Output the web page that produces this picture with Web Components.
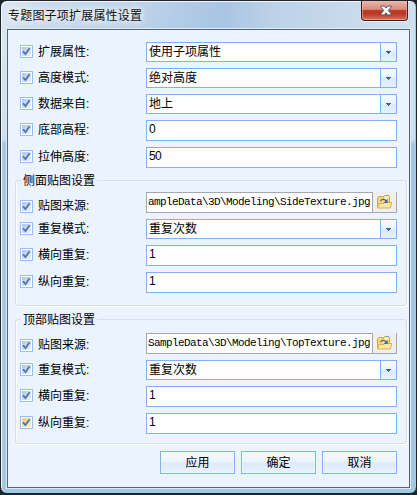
<!DOCTYPE html>
<html lang="zh-CN"><head><meta charset="utf-8"><title>专题图子项扩展属性设置</title>
<style>
html,body{margin:0;height:495px;overflow:hidden;background:#1c242c}
body{font:12px/14px "Liberation Sans","Noto Sans CJK SC",sans-serif;color:#000}
</style></head><body>
<dialog-window heading="专题图子项扩展属性设置">
  <field-row label="扩展属性:" style="margin-top:12px"><combo-box>使用子项属性</combo-box></field-row>
  <field-row label="高度模式:"><combo-box>绝对高度</combo-box></field-row>
  <field-row label="数据来自:"><combo-box>地上</combo-box></field-row>
  <field-row label="底部高程:"><text-field>0</text-field></field-row>
  <field-row label="拉伸高度:"><text-field>50</text-field></field-row>
  <group-box heading="侧面贴图设置" style="margin-top:5px;height:133px;--lead:5px">
    <field-row label="贴图来源:" style="--check-top:8px;--label-top:7px"><path-field>ampleData\3D\Modeling\SideTexture.jpg</path-field></field-row>
    <field-row label="重复模式:"><combo-box>重复次数</combo-box></field-row>
    <field-row label="横向重复:"><text-field>1</text-field></field-row>
    <field-row label="纵向重复:"><text-field>1</text-field></field-row>
  </group-box>
  <group-box heading="顶部贴图设置" style="margin-top:6px;height:132px;--lead:7px">
    <field-row label="贴图来源:" style="--check-top:6px;--label-top:5px"><path-field>SampleData\3D\Modeling\TopTexture.jpg</path-field></field-row>
    <field-row label="重复模式:"><combo-box>重复次数</combo-box></field-row>
    <field-row label="横向重复:"><text-field>1</text-field></field-row>
    <field-row label="纵向重复:" hot><text-field>1</text-field></field-row>
  </group-box>
  <button-bar><push-button>应用</push-button><push-button>确定</push-button><push-button>取消</push-button></button-bar>
</dialog-window>
<script>
const define=(name,html)=>customElements.define(name,class extends HTMLElement{
  connectedCallback(){
    if(this.shadowRoot)return;
    const t=document.createElement('template');
    t.innerHTML=typeof html==='function'?html(this):html;
    this.attachShadow({mode:'open'}).append(t.content.cloneNode(true));
  }
});
const base='*{box-sizing:border-box}';

define('close-button',`<style>${base}
:host{display:block;width:47px;height:20px;box-sizing:border-box;border:1px solid #431d20;border-top:0;border-radius:0 0 4px 4px;background:linear-gradient(#eab5a9 0,#dc8c7b 44%,#c0402b 48%,#b93622 65%,#dc7058 100%);box-shadow:inset 0 0 0 1px #f3c0b488,0 1px 0 #e6f2fb}
svg{display:block;margin:4px 0 0 18px}</style>
<svg width="12" height="11" viewBox="0 0 12 11"><path d="M1 1h3.4L6 3.1 7.6 1H11v1.3L8.3 5.5 11 8.7V10H7.6L6 7.9 4.4 10H1V8.7l2.7-3.2L1 2.3z" fill="#fff" stroke="#505468" stroke-width="1"/></svg>`);

define('dialog-window',h=>`<style>${base}
:host{display:flex;flex-direction:column;box-sizing:border-box;width:417px;height:494px;padding:0 7px 5px 6px;border:1px solid #20242e;border-radius:7px;box-shadow:inset 1px 1px 0 #f3f8fd,inset -1px -1px 0 #8fd0ef;background:linear-gradient(#0000 0 138px,#a9c6e3 143px),linear-gradient(100deg,#dde7f1 0,#cadbeb 40px,#bfd4e9 130px,#a8c5e2 220px,#bcd2e7 270px,#cfdfed 390px)}
header{height:28px;flex:none;display:flex;justify-content:space-between;padding:0 1px 0 1px}
h1{margin:7px 0 0;font:12px/14px "Noto Sans CJK SC",sans-serif;letter-spacing:.2px;color:#111;text-shadow:0 0 6px #fff,0 0 8px #fff}
main{flex:none;height:459px;width:403px;border:1px solid #566573;background:#ebf3fe;box-shadow:0 0 0 1px #dceaf7;display:flex;flex-direction:column}
</style><header><h1>${h.getAttribute('heading')}</h1><close-button></close-button></header><main><slot></slot></main>`);

define('check-box',`<style>${base}
:host{display:block;width:13px;height:13px;flex:none;border:1px solid #91c1f8;padding:1px;background:#fff;box-sizing:border-box}
div{width:9px;height:9px;background:linear-gradient(135deg,#b4c5da,#edf2f8)}
:host([hot]) div{background:linear-gradient(135deg,#f6c878,#fff0cb)}
svg{display:block}</style><div><svg width="9" height="9" viewBox="0 0 9 9"><path d="M1 4.4L3.5 7 7.6 1.2" fill="none" stroke="#4777b5" stroke-width="1.8"/></svg></div>`);

define('field-row',h=>`<style>${base}
:host{display:flex;align-items:flex-start;margin-top:6px;padding-left:12px;height:fit-content;flex:none}
check-box{margin-top:var(--check-top,3px)}
span{display:block;width:108px;margin:var(--label-top,3px) 0 0 5px;white-space:nowrap}
</style><check-box ${h.hasAttribute('hot')?'hot':''}></check-box><span>${h.getAttribute('label')}</span><slot></slot>`);

define('combo-box',`<style>${base}
:host{display:flex;width:251px;height:20px;border:1px solid #7db2f5;background:#fff;box-sizing:border-box}
span{flex:1;padding:2px 0 0 2px;white-space:nowrap}
i{width:16px;border-left:1px solid #7db2f5;background:linear-gradient(#f8fbff,#eaf3fe 45%,#dbe9f8 55%,#e8f2fd);display:flex;align-items:center;justify-content:center}
</style><span><slot></slot></span><i><svg width="5" height="3" viewBox="0 0 5 3"><path d="M0 0h5v1H4v1H3v1H2V2H1V1H0z" fill="#3e5f8a"/></svg></i>`);

define('text-field',`<style>
:host{display:block;width:251px;height:21px;border:1px solid #7db2f5;background:#fff;box-sizing:border-box;padding:1px 0 0 2px;font-family:"Liberation Sans",sans-serif;letter-spacing:-.6px}
</style><slot></slot>`);

define('path-field',`<style>${base}
:host{display:flex;width:251px;height:21px}
div{width:227px;border:1px solid #a5a9ae;background:#fff;display:flex;justify-content:flex-end;padding:2px 2px 0 1px}
span{overflow:hidden;white-space:nowrap;font:11px/14px "Liberation Mono",monospace;letter-spacing:-.6px}
i{width:24px;background:#efefee;border:solid #a5a9ae;border-width:0 1px 1px 0;padding:2px 0 0 3px}
svg{display:block}
</style><div><span><slot></slot></span></div><i><svg width="17" height="16" viewBox="0 0 17 16">
<path d="M1.5 13.5V3.5l1-1h4l1 1.2V2.5l1-1h4l1 1v11z" fill="#f4d47d" stroke="#d6a448"/>
<path d="M8.5 2.5h4v2h-4z" fill="#fff4cc"/><path d="M10 1h3v1h-3z" fill="#42b7ec"/>
<path d="M1.5 14L3 9.5h5l1-1h7L14.2 14z" fill="#fbe6a1" stroke="#dcae54"/>
<path d="M4.5 7c1.3-2 4-2.2 5.6.2" fill="none" stroke="#3f6799" stroke-width="1.2"/><path d="M11.6 5v4H7.8z" fill="#3f6799"/></svg></i>`);

define('group-box',h=>`<style>${base}
:host{display:block;width:392px;margin-left:7px;flex:none}
fieldset{height:100%;min-width:0;margin:0;padding:0;border:1px solid #d3dfeb;border-radius:3px;box-shadow:1px 1px 0 #fff,inset 1px 0 0 #fff}
legend{margin-left:5px;padding:1px 2px 0;width:76px;height:14px;line-height:14px;white-space:nowrap}
section{margin-left:-8px;padding-top:var(--lead)}
::slotted(field-row:first-child){margin-top:0}
</style><fieldset><legend>${h.getAttribute('heading')}</legend><section><slot></slot></section></fieldset>`);

define('button-bar',`<style>:host{display:flex;gap:6px;margin:7px 0 0 152px}</style><slot></slot>`);
define('push-button',`<style>
:host{display:flex;align-items:center;justify-content:center;width:75px;height:23px;box-sizing:border-box;border:1px solid #7db2f5;background:linear-gradient(#f5faff,#eaf3fd 48%,#dce9f8 52%,#e8f3fe);box-shadow:inset 0 0 0 1px #f3f9ff88}
</style><slot></slot>`);
</script></body></html>
